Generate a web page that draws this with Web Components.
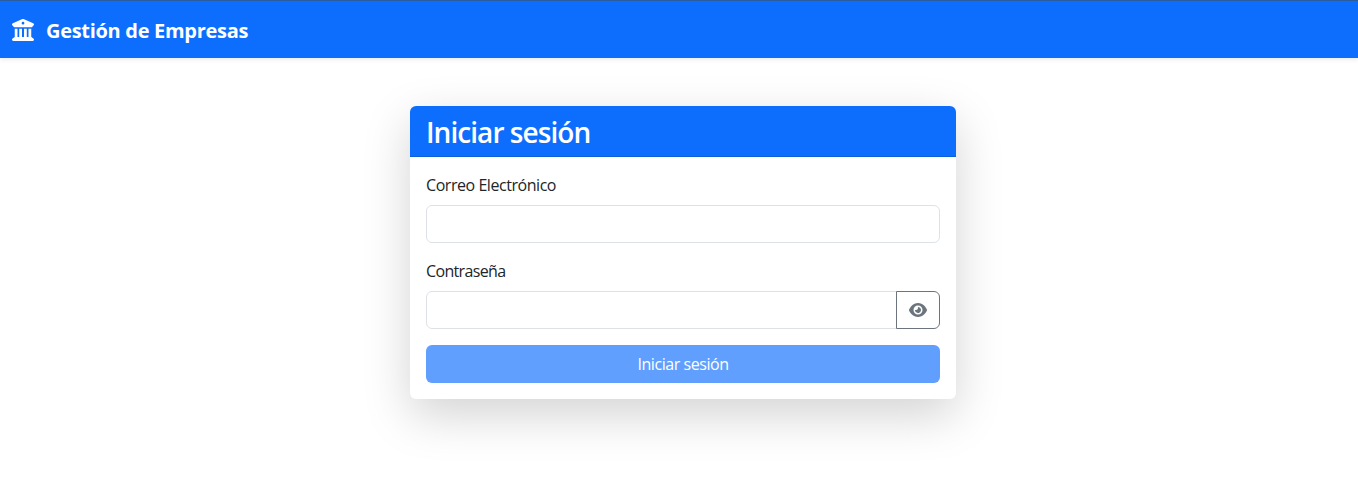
<!DOCTYPE html>
<html lang="es">
<head>
<meta charset="utf-8">
<title>Gestión de Empresas</title>
<style>
  html, body { height: 100%; }
  body {
    margin: 0;
    background: #fff;
    color: #212529;
    font-family: "Open Sans", "Noto Sans", sans-serif;
    font-size: 16px;
    line-height: 1.5;
    overflow: hidden;
  }
</style>
</head>
<body>
<app-navbar>Gestión de Empresas</app-navbar>
<login-page></login-page>

<script>
class AppNavbar extends HTMLElement {
  constructor() {
    super();
    this.shadowDOM = this.attachShadow({mode: 'open'});
    this.shadowDOM.innerHTML = `
      <style>
        :host {
          display: flex;
          align-items: center;
          gap: 12px;
          height: 57px;
          padding: 0 12px;
          border-top: 1px solid #2b5c9e;
          background: #0d6efd;
          color: #fff;
          font-size: 20px;
          font-weight: 700;
          letter-spacing: -0.3px;
          box-shadow: 0 2px 4px rgba(0, 0, 0, 0.075);
        }
        svg { display: block; width: 22px; height: 22px; }
        span { padding-top: 2px; }
      </style>
      <svg viewBox="0 0 512 512" aria-hidden="true">
        <path fill="#fff" d="M243.4 2.6l-224 96c-14 6-21.8 21-18.7 35.8S16.8 160 32 160v8c0 13.3 10.7 24 24 24H456c13.3 0 24-10.7 24-24v-8c15.2 0 28.3-10.7 31.3-25.6s-4.8-29.9-18.7-35.8l-224-96c-8-3.4-17.2-3.4-25.2 0zM128 224H64V420.3c-.6 .3-1.2 .7-1.8 1.1l-48 32c-11.7 7.8-17 22.4-12.9 35.9S17.9 512 32 512H480c14.1 0 26.5-9.2 30.6-22.7s-1.1-28.1-12.9-35.9l-48-32c-.6-.4-1.2-.7-1.8-1.1V224H384V416H344V224H280V416H232V224H168V416H128V224zM256 64a32 32 0 1 1 0 64 32 32 0 1 1 0-64z"/>
      </svg>
      <span><slot></slot></span>
    `;
  }
}

class FormField extends HTMLElement {
  constructor() {
    super();
    this.shadowDOM = this.attachShadow({mode: 'open'});
    this.shadowDOM.innerHTML = `
      <style>
        :host { display: block; margin-bottom: 16px; }
        label {
          display: block;
          margin-bottom: 8px;
          color: #212529;
          letter-spacing: -0.45px;
        }
        :host([reveal]) label { letter-spacing: -0.65px; }
        .group { display: flex; }
        input {
          flex: 1;
          min-width: 0;
          box-sizing: border-box;
          height: 38px;
          margin: 0;
          padding: 6px 12px;
          border: 1px solid #dee2e6;
          border-radius: 6px;
          background: #fff;
          font: inherit;
          outline: none;
        }
        :host([reveal]) input { border-radius: 6px 0 0 6px; }
        button {
          display: none;
          align-items: center;
          justify-content: center;
          box-sizing: border-box;
          width: 44px;
          height: 38px;
          margin: 0 0 0 -1px;
          padding: 0;
          border: 1px solid #6c757d;
          border-radius: 0 6px 6px 0;
          background: #fff;
        }
        :host([reveal]) button { display: flex; }
        svg { display: block; width: 18px; height: 16px; }
      </style>
      <label><slot></slot></label>
      <div class="group">
        <input>
        <button type="button" aria-label="Mostrar">
          <svg viewBox="0 0 576 512" aria-hidden="true">
            <path fill="#6c757d" d="M288 32c-80.8 0-145.5 36.8-192.6 80.6C48.6 156 17.3 208 2.5 243.7c-3.3 7.9-3.3 16.7 0 24.6C17.3 304 48.6 356 95.4 399.4C142.5 443.2 207.2 480 288 480s145.5-36.8 192.6-80.6c46.8-43.5 78.1-95.4 93-131.1c3.3-7.9 3.3-16.7 0-24.6c-14.9-35.7-46.2-87.7-93-131.1C433.5 68.8 368.8 32 288 32zM144 256a144 144 0 1 1 288 0 144 144 0 1 1 -288 0zm144-64c0 35.3-28.7 64-64 64c-7.1 0-13.9-1.2-20.3-3.3c-5.5-1.8-11.9 1.6-11.7 7.4c.3 6.9 1.3 13.8 3.2 20.7c13.7 51.2 66.4 81.6 117.6 67.9s81.6-66.4 67.9-117.6c-11.1-41.5-47.8-69.4-88.6-71.1c-5.8-.2-9.2 6.1-7.4 11.7c2.1 6.4 3.3 13.2 3.3 20.3z"/>
          </svg>
        </button>
      </div>
    `;
    this.shadowDOM.querySelector('input').type = this.getAttribute('type') || 'text';
  }
}

class LoginCard extends HTMLElement {
  constructor() {
    super();
    this.shadowDOM = this.attachShadow({mode: 'open'});
    this.shadowDOM.innerHTML = `
      <style>
        :host {
          display: block;
          width: 546px;
          height: 293px;
          border-radius: 6px;
          background: #fff;
          box-shadow: 0 16px 48px rgba(0, 0, 0, 0.175);
        }
        header {
          box-sizing: border-box;
          height: 51px;
          padding: 9px 16px 0;
          border-bottom: 1px solid #0b5ed7;
          border-radius: 6px 6px 0 0;
          background: #0d6efd;
          color: #fff;
          font-size: 28px;
          font-weight: 600;
          line-height: 34px;
          letter-spacing: -0.95px;
        }
        .body { padding: 16px; }
        .submit {
          display: block;
          box-sizing: border-box;
          width: 100%;
          height: 38px;
          margin: 0;
          padding: 0;
          border: 0;
          border-radius: 6px;
          background: #609ffd;
          color: #fff;
          font: inherit;
          letter-spacing: -0.45px;
        }
      </style>
      <header><slot name="title"></slot></header>
      <div class="body">
        <slot></slot>
        <button class="submit" type="button" disabled><slot name="action"></slot></button>
      </div>
    `;
  }
}

class LoginPage extends HTMLElement {
  constructor() {
    super();
    this.shadowDOM = this.attachShadow({mode: 'open'});
    this.shadowDOM.innerHTML = `
      <style>
        :host {
          display: flex;
          justify-content: center;
          box-sizing: border-box;
          height: calc(100% - 58px);
          padding: 48px 0 0 8px;
        }
      </style>
      <login-card>
        <span slot="title">Iniciar sesión</span>
        <form-field type="email">Correo Electrónico</form-field>
        <form-field type="password" reveal>Contraseña</form-field>
        <span slot="action">Iniciar sesión</span>
      </login-card>
    `;
  }
}

customElements.define('app-navbar', AppNavbar);
customElements.define('form-field', FormField);
customElements.define('login-card', LoginCard);
customElements.define('login-page', LoginPage);
</script>
</body>
</html>
